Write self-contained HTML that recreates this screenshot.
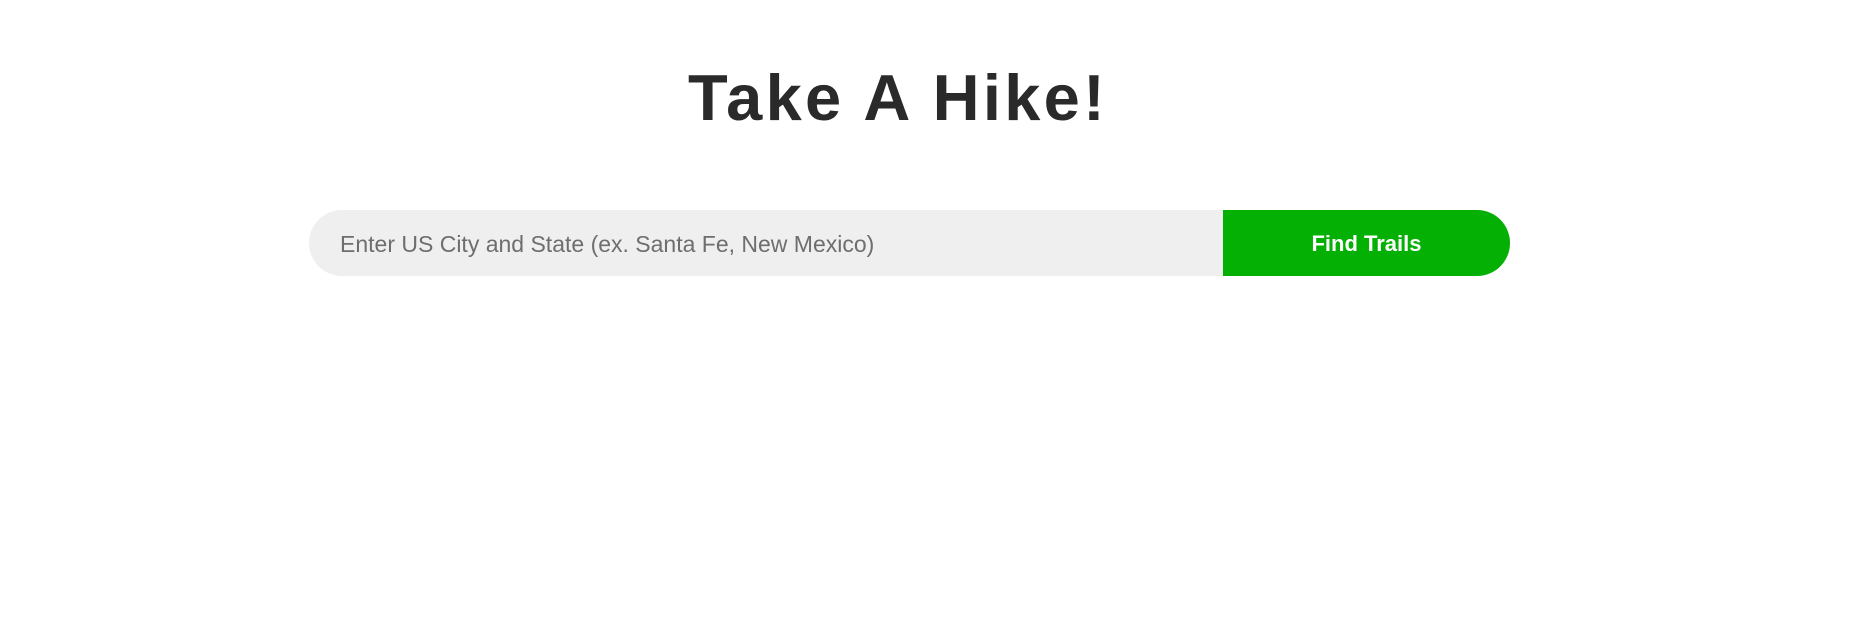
<!DOCTYPE html>
<html><head><meta charset="utf-8"><style>
html,body{margin:0;background:#fff;width:1872px;height:622px;overflow:hidden;font-family:"Liberation Sans",sans-serif}
h1{position:absolute;left:-38px;width:1872px;top:53px;margin:0;text-align:center;font-size:65px;font-weight:bold;color:#2a2a2a;line-height:90px;letter-spacing:3.3px}
.bar{position:absolute;left:309px;top:210px;width:1201px;height:66px;border-radius:33px;overflow:hidden;background:#efefef}
.ph{position:absolute;left:31px;top:1px;line-height:66px;font-size:23px;color:#6e6e6e}
.btn{position:absolute;left:914px;top:0;width:287px;height:66px;background:#04b004;color:#fff;font-weight:bold;font-size:22px;line-height:68px;text-align:center}
</style></head><body>
<h1>Take A Hike!</h1>
<div class="bar"><div class="ph">Enter US City and State (ex. Santa Fe, New Mexico)</div><div class="btn">Find Trails</div></div>
</body></html>
